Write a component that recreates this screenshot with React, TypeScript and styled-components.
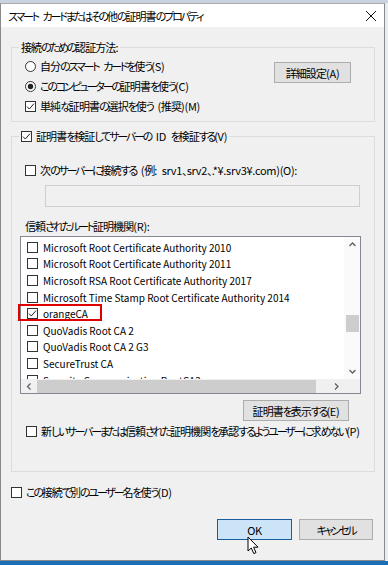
import React from "react";
import styled, { createGlobalStyle } from "styled-components";

// kana and latin runs get their own tracking, so the CJK font gets close to Yu Gothic UI widths
const RUNS = /([\u3041-\u309f\u30a0-\u30ff]+|[\u0020-\u00ff]+)/;
const KANA = /^[\u3041-\u309f\u30a0-\u30ff]+$/;
const LATIN = /^[\u0020-\u00ff]+$/;

const Jp: React.FC<{ children: string }> = ({ children }) => <>
    { children.split(RUNS).filter(Boolean).map((part, i) => {
        if (KANA.test(part)) return <Kana key={ i }>{ part }</Kana>;
        if (LATIN.test(part)) return <Latin key={ i }>{ part }</Latin>;
        return <React.Fragment key={ i }>{ part }</React.Fragment>;
    }) }
</>;

const certificates = [
    "Microsoft Root Certificate Authority 2010",
    "Microsoft Root Certificate Authority 2011",
    "Microsoft RSA Root Certificate Authority 2017",
    "Microsoft Time Stamp Root Certificate Authority 2014",
    "orangeCA",
    "QuoVadis Root CA 2",
    "QuoVadis Root CA 2 G3",
    "SecureTrust CA",
    "Security Communication RootCA2",
];

const CheckBox: React.FC<{ checked?: boolean }> = ({ checked }) => (
    <BoxIcon width="11" height="11" viewBox="0 0 11 11">
        <rect x="0.5" y="0.5" width="10" height="10" fill="#fff" stroke="#333"/>
        { checked && <polyline points="2,5.6 4.3,8 9,2.6" fill="none" stroke="#222" strokeWidth="1"/> }
    </BoxIcon>
);

const Radio: React.FC<{ checked?: boolean }> = ({ checked }) => (
    <BoxIcon width="11" height="11" viewBox="0 0 11 11">
        <circle cx="5.5" cy="5.5" r="5" fill="#fff" stroke="#333"/>
        { checked && <circle cx="5.5" cy="5.5" r="2.7" fill="#222"/> }
    </BoxIcon>
);

const Chevron: React.FC<{ dir: "up" | "down" | "left" | "right" }> = ({ dir }) => {
    const points = {
        up: "1.5,5 4.5,2 7.5,5",
        down: "1.5,3 4.5,6 7.5,3",
        left: "5.5,1.5 2.5,4.5 5.5,7.5",
        right: "3,1.5 6,4.5 3,7.5",
    }[dir];
    return <svg width="9" height="9" viewBox="0 0 9 9">
        <polyline points={ points } fill="none" stroke="#606060" strokeWidth="1.3"/>
    </svg>
};

const App: React.FC = () => {
    return <>
        <GlobalStyle/>
        <Desktop>
            <Window>
                <TitleBar>
                    <Title><Jp>スマート カードまたはその他の証明書のプロパティ</Jp></Title>
                    <CloseIcon width="12" height="12" viewBox="0 0 12 12">
                        <path d="M1 1 L11 11 M11 1 L1 11" stroke="#111" strokeWidth="1"/>
                    </CloseIcon>
                </TitleBar>
                <Body>
                    <GroupBox>
                        <Legend $height={ 16 }><Jp>接続のための認証方法:</Jp></Legend>
                        <AuthGrid>
                            <Option $indent={ 13 }>
                                <Radio/><Jp>自分のスマート カードを使う(S)</Jp>
                            </Option>
                            <AdvancedButton><Jp>詳細設定(A)</Jp></AdvancedButton>
                            <Option $indent={ 13 }>
                                <Radio checked/><Jp>このコンピューターの証明書を使う(C)</Jp>
                            </Option>
                            <Option $indent={ 13 }>
                                <CheckBox checked/><Jp>単純な証明書の選択を使う (推奨)(M)</Jp>
                            </Option>
                        </AuthGrid>
                    </GroupBox>

                    <VerifyGroup>
                        <Legend $height={ 20 }>
                            <Option $indent={ 0 }>
                                <CheckBox checked/><Jp>証明書を検証してサーバーの ID を検証する(V)</Jp>
                            </Option>
                        </Legend>
                        <VerifyContent>
                            <Option $indent={ 13 }>
                                <CheckBox/><Jp>次のサーバーに接続する (例: srv1、srv2、.*¥.srv3¥.com)(O):</Jp>
                            </Option>
                            <ServerInput disabled/>
                            <ListLabel><Jp>信頼されたルート証明機関(R):</Jp></ListLabel>
                            <ListBox>
                                <ListViewport>
                                    { certificates.map(name =>
                                        <ListRow key={ name } $marked={ name === "orangeCA" }>
                                            <CheckBox checked={ name === "orangeCA" }/>{ name }
                                        </ListRow>
                                    ) }
                                </ListViewport>
                                <VScroll>
                                    <ArrowCell><Chevron dir="up"/></ArrowCell>
                                    <VTrack>
                                        <VThumb $offset={ 62 }/>
                                    </VTrack>
                                    <ArrowCell><Chevron dir="down"/></ArrowCell>
                                </VScroll>
                                <HScroll>
                                    <ArrowCell><Chevron dir="left"/></ArrowCell>
                                    <HTrack>
                                        <HThumb/>
                                    </HTrack>
                                    <ArrowCell><Chevron dir="right"/></ArrowCell>
                                </HScroll>
                                <Corner/>
                            </ListBox>
                            <ShowCertButton><Jp>証明書を表示する(E)</Jp></ShowCertButton>
                            <Option $indent={ 14 }>
                                <CheckBox/><Jp>新しいサーバーまたは信頼された証明機関を承認するようユーザーに求めない(P)</Jp>
                            </Option>
                        </VerifyContent>
                    </VerifyGroup>

                    <UserRow>
                        <Option $indent={ 0 }>
                            <CheckBox/><Jp>この接続で別のユーザー名を使う(D)</Jp>
                        </Option>
                    </UserRow>

                    <Footer>
                        <Button $width={ 75 } $primary>
                            <Latin>OK</Latin>
                            <Cursor width="13" height="19" viewBox="0 0 13 19">
                                <path d="M1 1 L1 15 L4.3 12 L6.8 17.6 L9 16.6 L6.6 11.2 L11 11.2 Z"
                                      fill="#fff" stroke="#000" strokeWidth="1" strokeLinejoin="round"/>
                            </Cursor>
                        </Button>
                        <Button $width={ 74 }><Jp>キャンセル</Jp></Button>
                    </Footer>
                </Body>
            </Window>
            <Taskbar/>
        </Desktop>
    </>
}

export default App;

const GlobalStyle = createGlobalStyle`
  html, body {
    margin: 0;
    padding: 0;
  }

  body {
    font-family: "Noto Sans CJK JP", "Noto Sans", sans-serif;
    font-size: 11px;
    letter-spacing: -0.9px;
    word-spacing: 2.5px;
    font-feature-settings: "palt";
    color: #000;
  }
`;

const Kana = styled.span`
  letter-spacing: -2.2px;
`;

const Latin = styled.span`
  letter-spacing: -0.3px;
`;

const Desktop = styled.div`
  width: 388px;
  height: 565px;
  overflow: hidden;
  display: flex;
  flex-direction: column;
  background: #e9edf2;
  border-top: 3px solid #c9d2de;
  box-sizing: border-box;
`;

const Window = styled.div`
  width: 385px;
  height: 558px;
  flex: none;
  box-sizing: border-box;
  border: 1px solid #8a8a8a;
  border-top-color: #aaa;
  background: #f0f0f0;
  display: flex;
  flex-direction: column;
`;

const Taskbar = styled.div`
  flex: 1;
  background: #1a6fb6;
`;

const TitleBar = styled.div`
  height: 23px;
  flex: none;
  background: #fff;
  display: flex;
  align-items: center;
  justify-content: space-between;
  padding: 0 7px 0 7px;
`;

const Title = styled.span`
  line-height: 16px;
`;

const CloseIcon = styled.svg`
  display: block;
`;

const Body = styled.div`
  flex: 1;
  display: flex;
  flex-direction: column;
  padding: 12px 9px 0 10px;
`;

const BoxIcon = styled.svg`
  display: block;
  flex: none;
  margin-right: 4px;
`;

const GroupBox = styled.fieldset`
  margin: 0;
  padding: 1px 0 5px 0;
  border: 1px solid #dcdcdc;
  min-width: 0;
`;

const VerifyGroup = styled(GroupBox)`
  margin-top: 4px;
  padding: 0 0 30px 0;
`;

const Legend = styled.legend<{ $height: number }>`
  margin-left: 7px;
  padding: 0 2px;
  height: ${ p => p.$height }px;
  line-height: ${ p => p.$height }px;
  display: flex;
  align-items: center;
`;

const Option = styled.label<{ $indent: number }>`
  display: flex;
  align-items: center;
  height: 20px;
  padding-left: ${ p => p.$indent }px;
  white-space: pre;
`;

const AuthGrid = styled.div`
  display: grid;
  grid-template-columns: 1fr auto;
  grid-template-rows: 20px 20px 20px;
  padding-right: 23px;
`;

const Button = styled.button<{ $width: number; $primary?: boolean }>`
  position: relative;
  width: ${ p => p.$width }px;
  height: 21px;
  padding: 0;
  font: inherit;
  letter-spacing: inherit;
  word-spacing: inherit;
  color: #000;
  background: ${ p => p.$primary ? "#cce4f7" : "#e1e1e1" };
  border: 1px solid ${ p => p.$primary ? "#1b5d9c" : "#adadad" };
  border-radius: 0;
  box-sizing: border-box;
`;

const AdvancedButton = styled(Button).attrs({ $width: 77 })`
  grid-column: 2;
  grid-row: 1 / 3;
  align-self: start;
  margin-top: 6px;
`;

const VerifyContent = styled.div`
  display: flex;
  flex-direction: column;
  padding-top: 14px;
`;

const ServerInput = styled.input`
  margin: 5px 14px 0 33px;
  height: 22px;
  box-sizing: border-box;
  border: 1px solid #cfcfcf;
  background: #f0f0f0;
`;

const ListLabel = styled.div`
  margin: 12px 0 0 13px;
  height: 17px;
  line-height: 15px;
`;

const ListBox = styled.div`
  margin: 0 13px 0 8px;
  height: 158px;
  box-sizing: border-box;
  border: 1px solid #828790;
  background: #fff;
  display: grid;
  grid-template-columns: 1fr 16px;
  grid-template-rows: 1fr 14px;
`;

const ListViewport = styled.div`
  padding-top: 2px;
  clip-path: inset(0 -8px 0 -8px);
  min-height: 0;
`;

const ListRow = styled.div<{ $marked?: boolean }>`
  position: relative;
  height: 16.6px;
  display: flex;
  align-items: center;
  padding-left: 6px;
  white-space: nowrap;
  font-size: 10px;
  letter-spacing: 0;
  word-spacing: 0;

  ${ BoxIcon } {
    margin-right: 5px;
  }

  &::after {
    content: "";
    display: ${ p => p.$marked ? "block" : "none" };
    position: absolute;
    left: -3px;
    top: -1px;
    width: 84px;
    height: 17px;
    box-sizing: border-box;
    border: 2px solid #e10000;
  }
`;

const VScroll = styled.div`
  display: flex;
  flex-direction: column;
  background: #fafafa;
`;

const HScroll = styled.div`
  display: flex;
  background: #f0f0f0;
`;

const Corner = styled.div`
  background: #f0f0f0;
`;

const ArrowCell = styled.div`
  flex: none;
  width: 16px;
  height: 16px;
  display: flex;
  align-items: center;
  justify-content: center;

  ${ HScroll } & {
    height: 14px;
  }
`;

const VTrack = styled.div`
  flex: 1;
  display: flex;
  flex-direction: column;
  align-items: center;
`;

const VThumb = styled.div<{ $offset: number }>`
  margin-top: ${ p => p.$offset }px;
  width: 13px;
  height: 17px;
  background: #cdcdcd;
`;

const HTrack = styled.div`
  flex: 1;
  display: flex;
  align-items: center;
`;

const HThumb = styled.div`
  width: 279px;
  height: 13px;
  background: #cdcdcd;
`;

const ShowCertButton = styled(Button).attrs({ $width: 106 })`
  align-self: flex-end;
  margin: 6px 25px 0 0;
`;

const UserRow = styled.div`
  margin-top: 10px;
`;

const Footer = styled.div`
  display: flex;
  justify-content: flex-end;
  gap: 7px;
  margin-top: 17px;
  padding-right: 2px;
`;

const Cursor = styled.svg`
  position: absolute;
  left: 29px;
  top: 16px;
  pointer-events: none;
`;
